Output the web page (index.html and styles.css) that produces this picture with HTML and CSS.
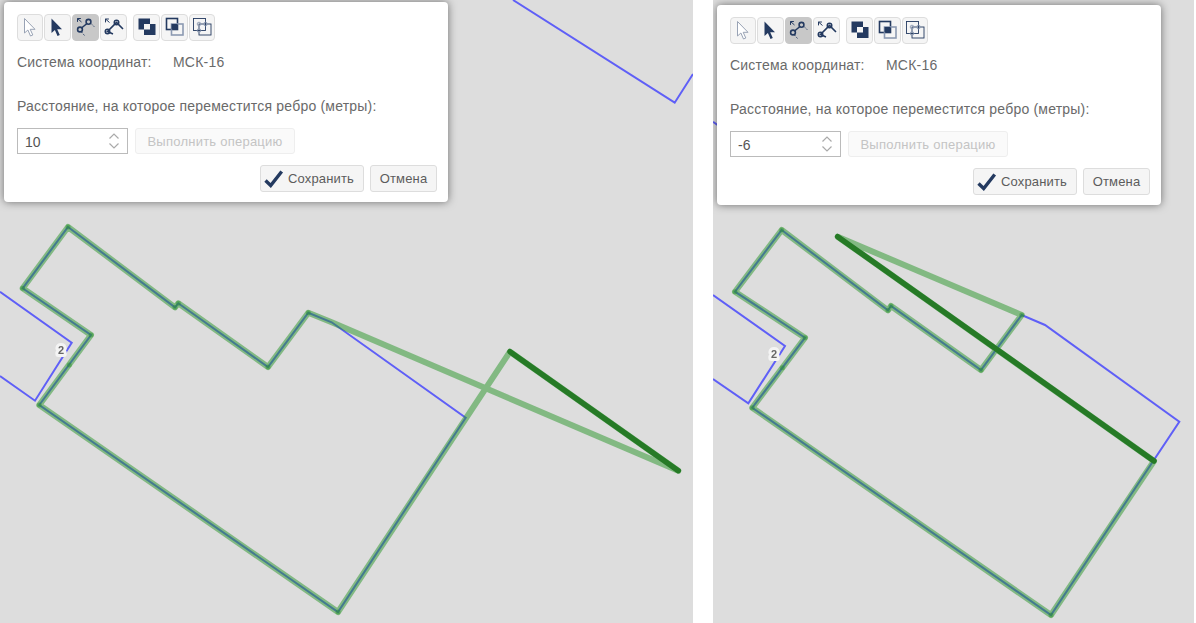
FILE: index.html
```html
<!DOCTYPE HTML>
<html>
  <head>
    <title>Перемещение ребра</title>
    <meta charset="utf-8" />
    <link rel="stylesheet" href="styles.css">
  </head>
  <body>
    <svg class="defs" width="0" height="0">
      <symbol id="i-arrow" viewBox="0 0 27 27"><path d="M7.5 4.5V19l3.4-3 2.6 6 2.3-1-2.6-5.7h4.8z"/></symbol>
      <symbol id="i-edge" viewBox="0 0 27 27">
        <path class="ln" d="M9.5 14 15 9.5"/>
        <circle class="ln" cx="8" cy="15.5" r="2.4"/>
        <circle class="ln" cx="16.5" cy="7.8" r="2.4"/>
        <path class="ln thin" d="M5.5 4.5 9.5 8M5.5 4.5h3.4M5.5 4.5v3.4"/>
        <path class="ln thin dots" d="M19 9.5 22.5 13M9.5 18 12.5 21.5"/>
      </symbol>
      <symbol id="i-edge2" viewBox="0 0 27 27">
        <path class="ln" d="M13 20 7.5 17.5 16.5 8.5 23 15"/>
        <circle class="ln" cx="7.5" cy="17.5" r="2.2"/>
        <circle class="ln" cx="16.5" cy="8.5" r="2.2"/>
        <path class="ln thin" d="M5.5 5 9.5 8.5M5.5 5h3.4M5.5 5v3.4"/>
      </symbol>
      <symbol id="i-union" viewBox="0 0 27 27">
        <path class="solid" d="M5.5 4.5H17V10h5.5v11H11V15.5H5.5z"/>
        <rect class="cut" x="11" y="10" width="6" height="5.5"/>
      </symbol>
      <symbol id="i-inter" viewBox="0 0 27 27">
        <rect class="ln" x="5.5" y="4.5" width="11" height="11"/>
        <rect class="ln pale" x="10.5" y="10" width="11.5" height="11"/>
        <rect class="solid" x="10.5" y="10" width="6" height="5.5"/>
      </symbol>
      <symbol id="i-diff" viewBox="0 0 27 27">
        <rect class="ln hair" x="4.5" y="4.5" width="12" height="12"/>
        <rect class="ln hair" x="10" y="10" width="12" height="11"/>
        <circle class="ln hair pale" cx="10" cy="10" r="1.8"/>
        <circle class="ln hair pale" cx="16.5" cy="10" r="1.8"/>
        <circle class="ln hair pale" cx="10" cy="16.5" r="1.8"/>
      </symbol>
    </svg>

    <div class="screens">
      <section class="map map-left">
        <svg class="plot" width="693" height="623">
          <polyline class="cad" points="513,0 674.7,102.7 693,74"/>
          <polyline class="cad" points="0,291.7 71.7,342.7 35,400.7 0,376"/>
          <polygon class="cad" points="68,227 175,307.3 178.3,303.3 268,367 308.3,312.7 331.7,322.3 465.7,417.7 338,612 39.3,405 91,335 22.7,288.3"/>
          <polygon class="draft" points="68,227 175,307.3 178.3,303.3 268,367 308.3,312.7 331.7,322.3 678.3,470.7 510,351.7 338,612 39.3,405 91,335 22.7,288.3"/>
          <g class="nodes">
            <circle cx="68" cy="227" r="2.5"/><circle cx="22.7" cy="288.3" r="2.5"/><circle cx="91" cy="335" r="2.5"/>
            <circle cx="39.3" cy="405" r="2.5"/><circle cx="338" cy="612" r="2.5"/><circle cx="268" cy="367" r="2.5"/>
            <circle cx="308.3" cy="312.7" r="2.5"/><circle cx="175" cy="307.3" r="2.5"/><circle cx="178.3" cy="303.3" r="2.5"/>
            <circle cx="69.3" cy="365" r="2.5"/>
          </g>
          <line class="edge" x1="510" y1="351.7" x2="678.3" y2="470.7"/>
          <text class="num-label" x="61" y="354">2</text>
        </svg>
        <div class="panel">
          <div class="tools">
            <div class="tool-group">
              <button class="tool ghost slim"><svg><use href="#i-arrow"/></svg></button>
              <button class="tool"><svg><use href="#i-arrow"/></svg></button>
              <button class="tool on"><svg><use href="#i-edge"/></svg></button>
              <button class="tool"><svg><use href="#i-edge2"/></svg></button>
            </div>
            <div class="tool-group">
              <button class="tool"><svg><use href="#i-union"/></svg></button>
              <button class="tool"><svg><use href="#i-inter"/></svg></button>
              <button class="tool slim"><svg><use href="#i-diff"/></svg></button>
            </div>
          </div>
          <div class="crs"><span class="crs-name">Система координат:</span><span>МСК-16</span></div>
          <div class="hint">Расстояние, на которое переместится ребро (метры):</div>
          <div class="run">
            <div class="spin">
              <input class="spin-input" value="10">
              <svg class="spin-arrows" width="12" height="20"><path d="M1.5 7.5 6 3l4.5 4.5M1.5 12.5 6 17l4.5-4.5"/></svg>
            </div>
            <button class="btn off">Выполнить операцию</button>
          </div>
          <div class="actions">
            <button class="btn save"><svg width="20" height="18"><path d="M1.5 10.5 6.7 15.5 17.7 1.5"/></svg>Сохранить</button>
            <button class="btn cancel">Отмена</button>
          </div>
        </div>
      </section>

      <section class="map map-right">
        <svg class="plot" width="481" height="623">
          <polyline class="cad" points="0,121.7 6,126"/>
          <polyline class="cad" points="0,295 72,346 35.3,403.3 0,379"/>
          <polygon class="cad" points="68.7,230 175,310.3 178,306 268,370 308.7,315 332,325 466.3,421.7 338,615 39.3,407.7 92,337.7 22,291.7"/>
          <polygon class="draft" points="68.7,230 175,310.3 178,306 268,370 308.7,315 124.7,236.7 441,461 338,615 39.3,407.7 92,337.7 22,291.7"/>
          <g class="nodes">
            <circle cx="68.7" cy="230" r="2.5"/><circle cx="22" cy="291.7" r="2.5"/><circle cx="92" cy="337.7" r="2.5"/>
            <circle cx="39.3" cy="407.7" r="2.5"/><circle cx="338" cy="615" r="2.5"/><circle cx="268" cy="370" r="2.5"/>
            <circle cx="308.7" cy="315" r="2.5"/><circle cx="175" cy="310.3" r="2.5"/><circle cx="178" cy="306" r="2.5"/>
            <circle cx="69.3" cy="367.7" r="2.5"/>
          </g>
          <line class="edge" x1="124.7" y1="236.7" x2="441" y2="461"/>
          <text class="num-label" x="61" y="358">2</text>
        </svg>
        <div class="panel panel-right">
          <div class="tools">
            <div class="tool-group">
              <button class="tool ghost slim"><svg><use href="#i-arrow"/></svg></button>
              <button class="tool"><svg><use href="#i-arrow"/></svg></button>
              <button class="tool on"><svg><use href="#i-edge"/></svg></button>
              <button class="tool"><svg><use href="#i-edge2"/></svg></button>
            </div>
            <div class="tool-group">
              <button class="tool"><svg><use href="#i-union"/></svg></button>
              <button class="tool"><svg><use href="#i-inter"/></svg></button>
              <button class="tool slim"><svg><use href="#i-diff"/></svg></button>
            </div>
          </div>
          <div class="crs"><span class="crs-name">Система координат:</span><span>МСК-16</span></div>
          <div class="hint">Расстояние, на которое переместится ребро (метры):</div>
          <div class="run">
            <div class="spin">
              <input class="spin-input" value="-6">
              <svg class="spin-arrows" width="12" height="20"><path d="M1.5 7.5 6 3l4.5 4.5M1.5 12.5 6 17l4.5-4.5"/></svg>
            </div>
            <button class="btn off">Выполнить операцию</button>
          </div>
          <div class="actions">
            <button class="btn save"><svg width="20" height="18"><path d="M1.5 10.5 6.7 15.5 17.7 1.5"/></svg>Сохранить</button>
            <button class="btn cancel">Отмена</button>
          </div>
        </div>
      </section>
    </div>
  </body>
</html>
```

FILE: styles.css
```css
html, body {
  margin: 0;
  height: 100%;
  background: #fff;
  overflow: hidden;
  font-family: "Liberation Sans", Arial, sans-serif;
  font-size: 14px;
  color: #6a6a6a;
}
.defs {
  position: absolute;
}
.screens {
  display: flex;
  gap: 20px;
  height: 623px;
}
.map {
  position: relative;
  overflow: hidden;
  background: #ddd;
  height: 623px;
}
.map-left {
  width: 693px;
}
.map-right {
  width: 481px;
}
.plot {
  display: block;
  filter: blur(0.5px);
}
.cad {
  fill: none;
  stroke: #5f5ff7;
  stroke-width: 2;
}
.draft {
  fill: none;
  stroke: rgba(40, 150, 40, 0.5);
  stroke-width: 6;
  stroke-linejoin: round;
}
.nodes circle {
  fill: rgba(40, 145, 40, 0.45);
}
.edge {
  stroke: #267a26;
  stroke-width: 5.5;
  stroke-linecap: round;
}
.num-label {
  font-size: 11px;
  font-weight: bold;
  fill: #666;
  text-anchor: middle;
  stroke: #f4f4f4;
  stroke-width: 6px;
  stroke-linejoin: round;
  paint-order: stroke;
}

.panel {
  position: absolute;
  left: 4px;
  top: 2px;
  box-sizing: border-box;
  width: 444px;
  height: 200px;
  padding: 12px 11px 0 13px;
  background: #fff;
  border-radius: 4px;
  box-shadow: 0 0 8px rgba(0, 0, 0, 0.5);
  letter-spacing: 0.2px;
}
.panel-right {
  top: 5px;
}
.tools {
  display: flex;
  gap: 6px;
}
.tool-group {
  display: flex;
  gap: 1px;
}
.tool {
  width: 27px;
  height: 27px;
  padding: 0;
  background: #f5f5f5;
  border: 1px solid #ddd;
  border-radius: 4px;
  position: relative;
}
.tool.slim {
  width: 26px;
}
.tool svg {
  position: absolute;
  left: -1px;
  top: -1px;
  width: 27px;
  height: 27px;
  fill: #243a60;
}
.tool.ghost svg {
  fill: #fff;
  stroke: #99a3b5;
  stroke-width: 1;
}
.tool.on {
  background: #c8c8c8;
  border-color: #c8c8c8;
}
.ln {
  fill: none;
  stroke: #243a60;
  stroke-width: 1.6;
}
.ln.thin {
  stroke-width: 1;
}
.ln.hair {
  stroke-width: 0.9;
}
.ln.dots {
  stroke-dasharray: 1.5 1.5;
}
.ln.pale {
  stroke: #8c9ab2;
}
.solid {
  fill: #243a60;
}
.cut {
  fill: #f5f5f5;
}

.crs {
  display: flex;
  margin-top: 13px;
  line-height: 16px;
}
.crs-name {
  width: 156px;
}
.hint {
  margin-top: 28px;
  line-height: 16px;
}
.run {
  display: flex;
  gap: 7px;
  margin-top: 14px;
}
.spin {
  position: relative;
  width: 111px;
  height: 26px;
}
.spin-input {
  box-sizing: border-box;
  width: 100%;
  height: 100%;
  padding: 2px 0 0 7px;
  border: 1px solid #bbb;
  font: 14px "Liberation Sans", Arial, sans-serif;
  color: #555;
  outline: none;
}
.spin-arrows {
  position: absolute;
  right: 8px;
  top: 3px;
  fill: none;
  stroke: #aaa;
  stroke-width: 1.2;
}
.btn {
  box-sizing: border-box;
  height: 27px;
  padding: 0;
  background: #f5f5f5;
  border: 1px solid #ddd;
  border-radius: 3px;
  font: 13px "Liberation Sans", Arial, sans-serif;
  letter-spacing: 0.15px;
  color: #5c5c5c;
}
.btn.off {
  width: 160px;
  height: 26px;
  background: #fafafa;
  border-color: #eee;
  color: #c4c4c4;
  letter-spacing: 0.24px;
}
.actions {
  display: flex;
  justify-content: flex-end;
  gap: 6px;
  margin-top: 11px;
}
.btn.save {
  display: flex;
  align-items: center;
  gap: 4px;
  width: 104px;
  padding: 0 0 0 3px;
}
.btn.save svg {
  fill: none;
  stroke: #243a60;
  stroke-width: 3.4;
}
.btn.cancel {
  width: 67px;
}
```
